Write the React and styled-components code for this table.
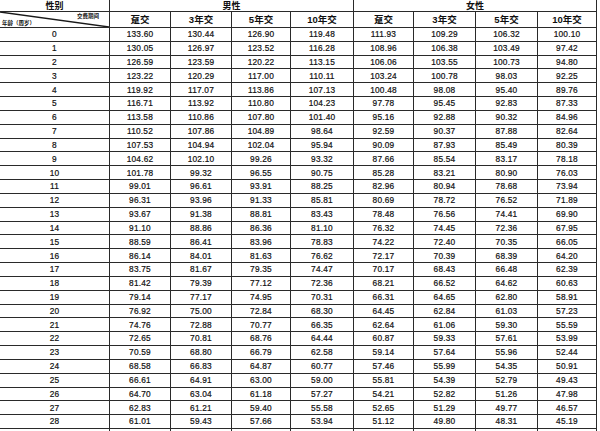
import React from 'react';
import styled, { createGlobalStyle } from 'styled-components';

const GlobalStyle = createGlobalStyle`
    html, body {
        margin: 0;
        padding: 0;
        background: #ffffff;
        overflow: hidden;
    }
    body {
        font-family: "Liberation Sans", "Noto Sans CJK SC", sans-serif;
        color: #101010;
    }
`;

const Sheet = styled.div`
    width: 600px;
    height: 431px;
    overflow: hidden;
    background: #ffffff;
`;

const Grid = styled.div`
    display: grid;
    grid-template-columns: 109px 60px 60px 58px 62px 59px 61px 61px 58px;
    grid-template-rows: 11px 15px;
    grid-auto-rows: 12.83px;
    gap: 1px;
    width: 596px;
    padding: 0 1px 0 0;
    background: #2a2a2a;
`;

const Cell = styled.div`
    background: #ffffff;
    display: flex;
    align-items: center;
    justify-content: center;
    font-size: 8.3px;
    font-weight: 400;
    letter-spacing: 0.2px;
    line-height: 1;
    white-space: nowrap;
    overflow: hidden;
    -webkit-text-stroke: 0.2px #101010;
`;

const GroupHead = styled(Cell)`
    grid-column: ${(p) => p.$span};
    font-family: "Noto Sans CJK SC", sans-serif;
    font-size: 9px;
    font-weight: 700;
    letter-spacing: 0;
    -webkit-text-stroke: 0;
`;

const ColHead = styled(Cell)`
    font-family: "Liberation Sans", "Noto Sans CJK SC", sans-serif;
    font-size: 9.5px;
    font-weight: 700;
    letter-spacing: 0;
    -webkit-text-stroke: 0;
`;

const CornerCell = styled.div`
    position: relative;
    background: #ffffff;
    overflow: hidden;
`;

const Diagonal = styled.svg`
    position: absolute;
    inset: 0;
    width: 100%;
    height: 100%;
`;

const CornerTop = styled.span`
    position: absolute;
    right: 10px;
    top: 2px;
    font-family: "Noto Sans CJK SC", sans-serif;
    font-size: 5.5px;
    font-weight: 700;
    line-height: 1;
`;

const CornerBottom = styled.span`
    position: absolute;
    left: 2px;
    bottom: 1px;
    font-family: "Noto Sans CJK SC", sans-serif;
    font-size: 5.5px;
    font-weight: 700;
    line-height: 1;
`;

const rows = [
    [0, '133.60', '130.44', '126.90', '119.48', '111.93', '109.29', '106.32', '100.10'],
    [1, '130.05', '126.97', '123.52', '116.28', '108.96', '106.38', '103.49', '97.42'],
    [2, '126.59', '123.59', '120.22', '113.15', '106.06', '103.55', '100.73', '94.80'],
    [3, '123.22', '120.29', '117.00', '110.11', '103.24', '100.78', '98.03', '92.25'],
    [4, '119.92', '117.07', '113.86', '107.13', '100.48', '98.08', '95.40', '89.76'],
    [5, '116.71', '113.92', '110.80', '104.23', '97.78', '95.45', '92.83', '87.33'],
    [6, '113.58', '110.86', '107.80', '101.40', '95.16', '92.88', '90.32', '84.96'],
    [7, '110.52', '107.86', '104.89', '98.64', '92.59', '90.37', '87.88', '82.64'],
    [8, '107.53', '104.94', '102.04', '95.94', '90.09', '87.93', '85.49', '80.39'],
    [9, '104.62', '102.10', '99.26', '93.32', '87.66', '85.54', '83.17', '78.18'],
    [10, '101.78', '99.32', '96.55', '90.75', '85.28', '83.21', '80.90', '76.03'],
    [11, '99.01', '96.61', '93.91', '88.25', '82.96', '80.94', '78.68', '73.94'],
    [12, '96.31', '93.96', '91.33', '85.81', '80.69', '78.72', '76.52', '71.89'],
    [13, '93.67', '91.38', '88.81', '83.43', '78.48', '76.56', '74.41', '69.90'],
    [14, '91.10', '88.86', '86.36', '81.10', '76.32', '74.45', '72.36', '67.95'],
    [15, '88.59', '86.41', '83.96', '78.83', '74.22', '72.40', '70.35', '66.05'],
    [16, '86.14', '84.01', '81.63', '76.62', '72.17', '70.39', '68.39', '64.20'],
    [17, '83.75', '81.67', '79.35', '74.47', '70.17', '68.43', '66.48', '62.39'],
    [18, '81.42', '79.39', '77.12', '72.36', '68.21', '66.52', '64.62', '60.63'],
    [19, '79.14', '77.17', '74.95', '70.31', '66.31', '64.65', '62.80', '58.91'],
    [20, '76.92', '75.00', '72.84', '68.30', '64.45', '62.84', '61.03', '57.23'],
    [21, '74.76', '72.88', '70.77', '66.35', '62.64', '61.06', '59.30', '55.59'],
    [22, '72.65', '70.81', '68.76', '64.44', '60.87', '59.33', '57.61', '53.99'],
    [23, '70.59', '68.80', '66.79', '62.58', '59.14', '57.64', '55.96', '52.44'],
    [24, '68.58', '66.83', '64.87', '60.77', '57.46', '55.99', '54.35', '50.91'],
    [25, '66.61', '64.91', '63.00', '59.00', '55.81', '54.39', '52.79', '49.43'],
    [26, '64.70', '63.04', '61.18', '57.27', '54.21', '52.82', '51.26', '47.98'],
    [27, '62.83', '61.21', '59.40', '55.58', '52.65', '51.29', '49.77', '46.57'],
    [28, '61.01', '59.43', '57.66', '53.94', '51.12', '49.80', '48.31', '45.19'],
    ['', '', '', '', '', '', '', '', ''],
];

const periods = ['趸交', '3年交', '5年交', '10年交'];

export default function App() {
    return (
        <Sheet>
            <GlobalStyle />
            <Grid>
                <GroupHead $span="1 / 2">性别</GroupHead>
                <GroupHead $span="2 / 6">男性</GroupHead>
                <GroupHead $span="6 / 10">女性</GroupHead>

                <CornerCell>
                    <Diagonal viewBox="0 0 100 100" preserveAspectRatio="none">
                        <line x1="0" y1="0" x2="100" y2="100" stroke="#1a1a1a" strokeWidth="1.4" vectorEffect="non-scaling-stroke" />
                    </Diagonal>
                    <CornerTop>交费期间</CornerTop>
                    <CornerBottom>年龄（周岁）</CornerBottom>
                </CornerCell>
                {[...periods, ...periods].map((p, i) => (
                    <ColHead key={i}>{p}</ColHead>
                ))}

                {rows.map((row, r) =>
                    row.map((v, c) => <Cell key={`${r}-${c}`}>{v}</Cell>)
                )}
            </Grid>
        </Sheet>
    );
}
